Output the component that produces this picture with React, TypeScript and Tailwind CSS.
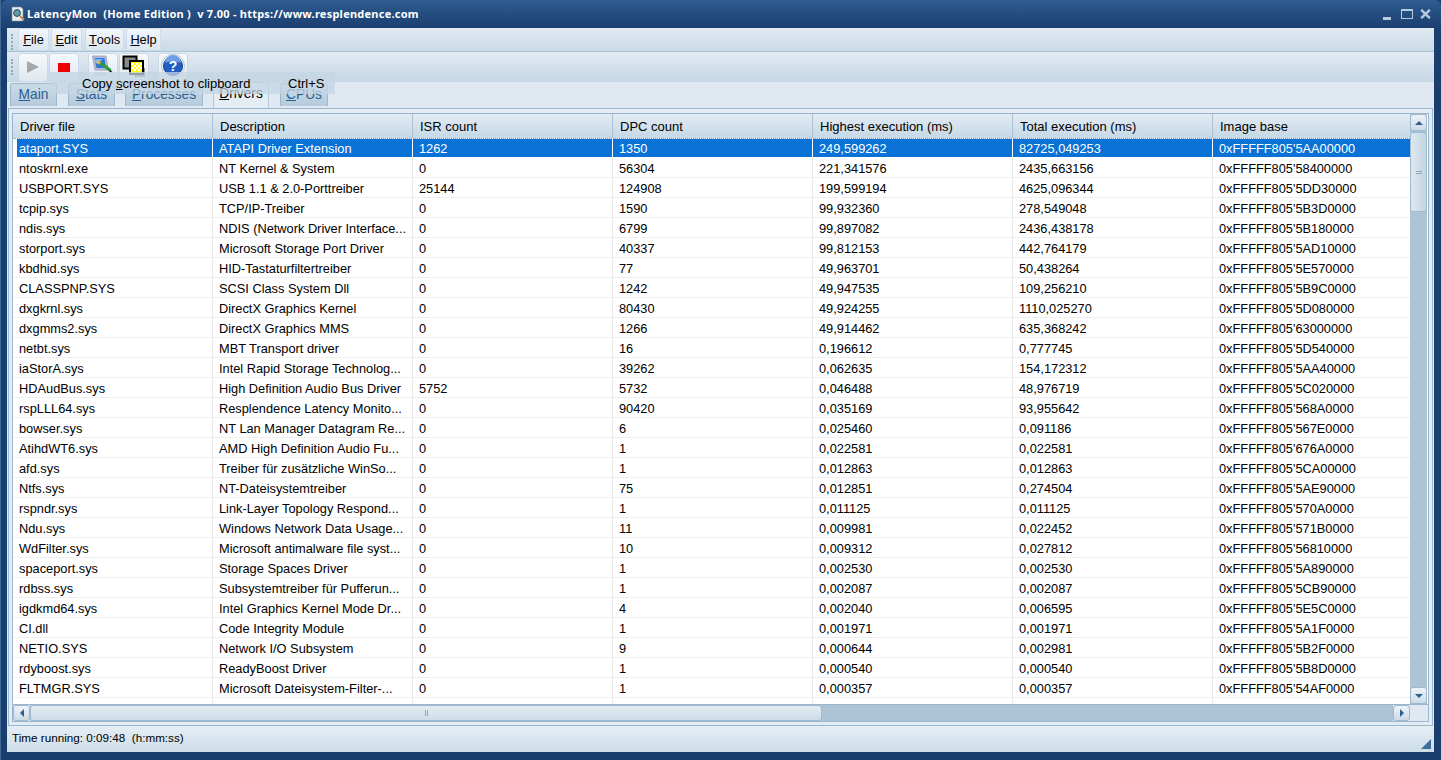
import React from "react";

type Row = [string, string, string, string, string, string, string];

const rows: Row[] = [
  ["ataport.SYS", "ATAPI Driver Extension", "1262", "1350", "249,599262", "82725,049253", "0xFFFFF805'5AA00000"],
  ["ntoskrnl.exe", "NT Kernel & System", "0", "56304", "221,341576", "2435,663156", "0xFFFFF805'58400000"],
  ["USBPORT.SYS", "USB 1.1 & 2.0-Porttreiber", "25144", "124908", "199,599194", "4625,096344", "0xFFFFF805'5DD30000"],
  ["tcpip.sys", "TCP/IP-Treiber", "0", "1590", "99,932360", "278,549048", "0xFFFFF805'5B3D0000"],
  ["ndis.sys", "NDIS (Network Driver Interface...", "0", "6799", "99,897082", "2436,438178", "0xFFFFF805'5B180000"],
  ["storport.sys", "Microsoft Storage Port Driver", "0", "40337", "99,812153", "442,764179", "0xFFFFF805'5AD10000"],
  ["kbdhid.sys", "HID-Tastaturfiltertreiber", "0", "77", "49,963701", "50,438264", "0xFFFFF805'5E570000"],
  ["CLASSPNP.SYS", "SCSI Class System Dll", "0", "1242", "49,947535", "109,256210", "0xFFFFF805'5B9C0000"],
  ["dxgkrnl.sys", "DirectX Graphics Kernel", "0", "80430", "49,924255", "1110,025270", "0xFFFFF805'5D080000"],
  ["dxgmms2.sys", "DirectX Graphics MMS", "0", "1266", "49,914462", "635,368242", "0xFFFFF805'63000000"],
  ["netbt.sys", "MBT Transport driver", "0", "16", "0,196612", "0,777745", "0xFFFFF805'5D540000"],
  ["iaStorA.sys", "Intel Rapid Storage Technolog...", "0", "39262", "0,062635", "154,172312", "0xFFFFF805'5AA40000"],
  ["HDAudBus.sys", "High Definition Audio Bus Driver", "5752", "5732", "0,046488", "48,976719", "0xFFFFF805'5C020000"],
  ["rspLLL64.sys", "Resplendence Latency Monito...", "0", "90420", "0,035169", "93,955642", "0xFFFFF805'568A0000"],
  ["bowser.sys", "NT Lan Manager Datagram Re...", "0", "6", "0,025460", "0,091186", "0xFFFFF805'567E0000"],
  ["AtihdWT6.sys", "AMD High Definition Audio Fu...", "0", "1", "0,022581", "0,022581", "0xFFFFF805'676A0000"],
  ["afd.sys", "Treiber für zusätzliche WinSo...", "0", "1", "0,012863", "0,012863", "0xFFFFF805'5CA00000"],
  ["Ntfs.sys", "NT-Dateisystemtreiber", "0", "75", "0,012851", "0,274504", "0xFFFFF805'5AE90000"],
  ["rspndr.sys", "Link-Layer Topology Respond...", "0", "1", "0,011125", "0,011125", "0xFFFFF805'570A0000"],
  ["Ndu.sys", "Windows Network Data Usage...", "0", "11", "0,009981", "0,022452", "0xFFFFF805'571B0000"],
  ["WdFilter.sys", "Microsoft antimalware file syst...", "0", "10", "0,009312", "0,027812", "0xFFFFF805'56810000"],
  ["spaceport.sys", "Storage Spaces Driver", "0", "1", "0,002530", "0,002530", "0xFFFFF805'5A890000"],
  ["rdbss.sys", "Subsystemtreiber für Pufferun...", "0", "1", "0,002087", "0,002087", "0xFFFFF805'5CB90000"],
  ["igdkmd64.sys", "Intel Graphics Kernel Mode Dr...", "0", "4", "0,002040", "0,006595", "0xFFFFF805'5E5C0000"],
  ["CI.dll", "Code Integrity Module", "0", "1", "0,001971", "0,001971", "0xFFFFF805'5A1F0000"],
  ["NETIO.SYS", "Network I/O Subsystem", "0", "9", "0,000644", "0,002981", "0xFFFFF805'5B2F0000"],
  ["rdyboost.sys", "ReadyBoost Driver", "0", "1", "0,000540", "0,000540", "0xFFFFF805'5B8D0000"],
  ["FLTMGR.SYS", "Microsoft Dateisystem-Filter-...", "0", "1", "0,000357", "0,000357", "0xFFFFF805'54AF0000"],
  ["disk.sys", "PnP Disk Driver", "0", "2", "0,000342", "0,000342", "0xFFFFF805'57A10000"],
];

const headers = ["Driver file", "Description", "ISR count", "DPC count", "Highest execution (ms)", "Total execution (ms)", "Image base"];

const Grip = () => (
  <div className="w-[2px] h-[16px] ml-[4px] mr-[5px] border-l-2 border-dotted border-[#8fa9bf] shrink-0" />
);

const MenuItem = ({ mn, rest, w }: { mn: string; rest: string; w: string }) => (
  <div className={w + " h-[22px] flex items-center justify-center rounded-t-[3px] border border-b-0 border-[#cfdce8] bg-gradient-to-b from-[#f2f6fa] to-[#dbe6ef] text-[12.75px] text-black"}>
    <span className="underline">{mn}</span>
    {rest}
  </div>
);

const ToolButton = ({ children }: { children: React.ReactNode }) => (
  <div className="w-[30px] h-[29px] flex items-center justify-center rounded-[3px] border border-[#cbd9e5] bg-gradient-to-b from-[#f6f9fb] to-[#dfe8f0]">
    {children}
  </div>
);

const Tab = ({ mn, rest, w, active }: { mn: string; rest: string; w: string; active?: boolean }) => (
  <div
    className={
      w +
      " flex items-center justify-center rounded-t-[3px] border border-b-0 text-[13.75px] " +
      (active
        ? "h-[26px] pb-[3px] border-[#b5c9da] bg-[#e4ecf4] text-black"
        : "h-[23px] mb-[2px] border-[#9db8cd] bg-gradient-to-b from-[#cbdbe8] to-[#b5cbdc] text-[#2a5f8f]")
    }
  >
    <span className="underline">{mn}</span>
    {rest}
  </div>
);

const ScrollBtn = ({ className, children }: { className: string; children: React.ReactNode }) => (
  <div className={"flex items-center justify-center rounded-[3px] border border-[#9fb9ce] bg-gradient-to-b from-[#eef3f7] to-[#cddce8] " + className}>
    {children}
  </div>
);

export default function App() {
  return (
    <div className="w-[1441px] h-[760px] flex flex-col overflow-hidden bg-[#1a3e6e] border-l border-[#3f6a98] font-['Liberation_Sans',Arial,sans-serif]">
      {/* title bar */}
      <div className="h-[28px] shrink-0 flex items-center pl-[9px] pr-[10px] rounded-t-[6px] bg-gradient-to-b from-[#2f5c90] to-[#1b3f70] text-white">
        <svg width="16" height="16" viewBox="0 0 16 16" className="shrink-0">
          <path d="M2 1h9l2 2v12H2z" fill="#e8eef3" stroke="#7d8b99" strokeWidth="0.6" />
          <circle cx="7" cy="7" r="3.4" fill="#5fa0a8" stroke="#33464f" />
          <path d="M10 10l4 4" stroke="#c28a46" strokeWidth="2" />
        </svg>
        <span className="ml-[1px] whitespace-pre text-[11px] font-bold font-['Noto_Sans',sans-serif] tracking-[0.24px]">
          LatencyMon  (Home Edition )  v 7.00 - https://www.resplendence.com
        </span>
        <div className="ml-auto flex items-center">
          <svg width="8" height="4" viewBox="0 0 8 4" className="mt-[10px]">
            <rect width="8" height="3" fill="#b7cbde" />
          </svg>
          <svg width="12" height="10" viewBox="0 0 12 10" className="ml-[10px]">
            <rect x="0.5" y="1" width="11" height="8.5" fill="none" stroke="#b7cbde" />
            <rect x="0" y="0" width="12" height="2" fill="#b7cbde" />
          </svg>
          <svg width="11" height="10" viewBox="0 0 11 10" className="ml-[7px]">
            <path d="M1.2 0.8l8.6 8.4M9.8 0.8l-8.6 8.4" stroke="#b7cbde" strokeWidth="2.4" />
          </svg>
        </div>
      </div>

      {/* client */}
      <div className="relative ml-[6px] mr-[7px] h-[724px] shrink-0 flex flex-col bg-[#e3ebf3]">
        {/* menu */}
        <div className="h-[24px] shrink-0 flex items-end pb-[1px] border-b border-[#a9c2d6] bg-gradient-to-b from-[#e2eaf3] to-[#c9dae7]">
          <Grip />
          <div className="flex -mb-[1px] pb-[1px]">
            <MenuItem mn="F" rest="ile" w="w-[31px]" />
            <div className="ml-[2px]">
              <MenuItem mn="E" rest="dit" w="w-[31px]" />
            </div>
            <div className="ml-[3px]">
              <MenuItem mn="T" rest="ools" w="w-[39px]" />
            </div>
            <div className="ml-[2px]">
              <MenuItem mn="H" rest="elp" w="w-[35px]" />
            </div>
          </div>
        </div>

        {/* toolbar */}
        <div className="h-[30px] shrink-0 flex items-center bg-gradient-to-b from-[#e2eaf3] to-[#c5d7e5]">
          <Grip />
          <ToolButton>
            <svg width="14" height="14" viewBox="0 0 14 14" className="-mt-[1px]">
              <path d="M1 1l12 6-12 6z" fill="#a3a8ac" />
            </svg>
          </ToolButton>
          <div className="ml-[1px]">
            <ToolButton>
              <div className="w-[12px] h-[9px] bg-[#f00000]" />
            </ToolButton>
          </div>
          <div className="ml-[9px]">
            <ToolButton>
              <svg width="24" height="24" viewBox="0 0 24 24" className="-mt-[2px]">
                <ellipse cx="9" cy="20" rx="7" ry="2" fill="#c9d3dc" />
                <path d="M1.5 2h13.5l2 14H4z" fill="#b9bfd8" stroke="#8f97b8" strokeWidth="0.8" />
                <path d="M3.5 4h10l1.3 10H5.5z" fill="#2f74d6" />
                <path d="M4 5h8l-6 4.5H4.6z" fill="#7fbaf0" />
                <path d="M5 8l3.5-1.5 2 2.5-3 1.5z" fill="#e8b552" />
                <path d="M9.5 9l10 7.5" stroke="#2c9c3e" strokeWidth="3.2" />
                <path d="M19 15.5l3 3-3.6-.6z" fill="#1d2a20" />
              </svg>
            </ToolButton>
          </div>
          <div className="ml-[1px]">
            <ToolButton>
              <svg width="24" height="24" viewBox="0 0 24 24">
                <rect x="13" y="13" width="10" height="9" fill="#8b8b8b" />
                <rect x="1.5" y="1.5" width="13" height="12" fill="#8a8a8a" stroke="#000" strokeWidth="2" />
                <rect x="8" y="6" width="13" height="13" fill="#ffff00" stroke="#000" strokeWidth="2" />
                <path d="M10 8h2v2h-2zM14 8h2v2h-2zM18 8h2v2h-2zM12 10h2v2h-2zM16 10h2v2h-2zM10 12h2v2h-2zM14 12h2v2h-2zM18 12h2v2h-2zM12 14h2v2h-2zM16 14h2v2h-2z" fill="#fff" />
              </svg>
            </ToolButton>
          </div>
          <div className="ml-[9px]">
            <ToolButton>
              <svg width="26" height="26" viewBox="0 0 26 26" className="-mt-[2px]">
                <circle cx="13" cy="13" r="11.5" fill="#f3f6f9" stroke="#b9c4ce" />
                <circle cx="13" cy="13" r="9.5" fill="#1f5fc4" stroke="#133f8c" />
                <path d="M5 10a8 8 0 0 1 16 0c-5-2-11-2-16 0z" fill="#6d9fe6" />
                <text x="13" y="18" textAnchor="middle" fontSize="14" fontWeight="700" fontFamily="Liberation Sans" fill="#fff">?</text>
              </svg>
            </ToolButton>
          </div>
        </div>

        {/* tabs */}
        <div className="h-[26px] shrink-0 flex items-end pl-[3px] bg-[#e0e8f1]">
          <Tab mn="M" rest="ain" w="w-[47px]" />
          <div className="ml-[11px]">
            <Tab mn="S" rest="tats" w="w-[47px]" />
          </div>
          <div className="ml-[10px]">
            <Tab mn="P" rest="rocesses" w="w-[78px]" />
          </div>
          <div className="ml-[10px]">
            <Tab mn="D" rest="rivers" w="w-[56px]" active />
          </div>
          <div className="ml-[11px]">
            <Tab mn="C" rest="PUs" w="w-[48px]" />
          </div>
        </div>

        {/* panel */}
        <div className="mx-[1px] h-[618px] shrink-0 flex flex-col border border-[#9ab7cf] px-[3px] pt-[4px] pb-[3px] bg-[#e3ebf3]">
          <div className="flex-1 min-h-0 flex flex-col border border-[#9ab7cf] bg-white overflow-hidden">
            <div className="flex-1 min-h-0 flex">
              <div className="w-[1397px] shrink-0 overflow-hidden flex flex-col">
                <div className="h-[25px] shrink-0 flex border-b border-dotted border-[#e08a2a] bg-gradient-to-b from-[#e2ebf3] to-[#c6d8e6] text-[13px] text-black">
                  {headers.map((h, i) => (
                    <div key={h} className={(i === 6 ? "w-[197px]" : "w-[200px] border-r border-[#a9c2d6]") + " shrink-0 pl-[7px] pt-[1px] flex items-center"}>
                      {h}
                    </div>
                  ))}
                </div>
                {rows.map((r, ri) => (
                  <div
                    key={r[0]}
                    className={
                      "shrink-0 flex items-center text-[12.8px] whitespace-nowrap border-b " +
                      (ri === 0 ? "h-[19px] bg-[#0a72d6] text-white border-white" : "h-[20px] bg-white text-black border-[#efefef]")
                    }
                  >
                    {r.map((c, i) => (
                      <div
                        key={i}
                        className={
                          (i === 6 ? "w-[197px]" : "w-[200px] border-r ") +
                          (ri === 0 ? " border-white pt-[1px]" : " border-[#e9e9e9] pt-[2px]") +
                          (ri === 0 && i === 0 ? " border-l-4 pl-[2px]" : " pl-[6px]") +
                          " h-full shrink-0 flex items-center overflow-hidden"
                        }
                      >
                        {c}
                      </div>
                    ))}
                  </div>
                ))}
              </div>
              {/* vertical scrollbar */}
              <div className="w-[17px] shrink-0 flex flex-col bg-[#adc4d6]">
                <ScrollBtn className="h-[17px] shrink-0">
                  <div className="w-0 h-0 border-x-[4px] border-x-transparent border-b-[4px] border-b-[#2c5f8f]" />
                </ScrollBtn>
                <div className="mt-[1px] h-[80px] shrink-0 flex flex-col items-center justify-center gap-[1px] rounded-[3px] border border-[#9fb9ce] bg-gradient-to-r from-[#dfe8f0] to-[#c3d5e2]">
                  <div className="w-[6px] h-[1px] bg-[#8ea9be]" />
                  <div className="w-[6px] h-[1px] bg-[#8ea9be]" />
                </div>
                <ScrollBtn className="mt-auto h-[17px] shrink-0">
                  <div className="w-0 h-0 border-x-[4px] border-x-transparent border-t-[4px] border-t-[#2c5f8f]" />
                </ScrollBtn>
              </div>
            </div>
            {/* horizontal scrollbar */}
            <div className="h-[17px] shrink-0 flex border-t border-[#9ab7cf] bg-[#e0e9f1]">
              <ScrollBtn className="w-[17px] shrink-0">
                <div className="w-0 h-0 border-y-[4px] border-y-transparent border-r-[4px] border-r-[#2c5f8f]" />
              </ScrollBtn>
              <div className="w-[1363px] shrink-0 flex bg-[#adc4d6]">
                <div className="w-[792px] shrink-0 flex items-center justify-center gap-[1px] rounded-[3px] border border-[#9fb9ce] bg-gradient-to-b from-[#e3ecf3] to-[#cfdde9]">
                  <div className="w-[1px] h-[6px] bg-[#8ea9be]" />
                  <div className="w-[1px] h-[6px] bg-[#8ea9be]" />
                </div>
              </div>
              <ScrollBtn className="w-[17px] shrink-0">
                <div className="w-0 h-0 border-y-[4px] border-y-transparent border-l-[4px] border-l-[#2c5f8f]" />
              </ScrollBtn>
            </div>
          </div>
        </div>

        {/* status */}
        <div className="flex-1 relative flex items-center pl-[5px] pb-[3px] bg-gradient-to-b from-[#e6eef4] to-[#cddde8] text-[11.7px] text-black whitespace-pre">
          Time running: 0:09:48  (h:mm:ss)
          <div className="absolute right-[3px] bottom-[3px] w-0 h-0 border-l-[10px] border-l-transparent border-b-[10px] border-b-[#3d6e9e]" />
        </div>

        {/* fading menu tip */}
        <div className="absolute left-[43px] top-[44px] w-[285px] h-[22px] pt-[1px] flex items-center whitespace-pre bg-[#c4d6e4]/75 text-[13px] text-black">
          <span className="ml-[32px] w-[206px]">
            Copy <span className="underline">s</span>creenshot to clipboard
          </span>
          <span>Ctrl+S</span>
        </div>
      </div>
    </div>
  );
}
